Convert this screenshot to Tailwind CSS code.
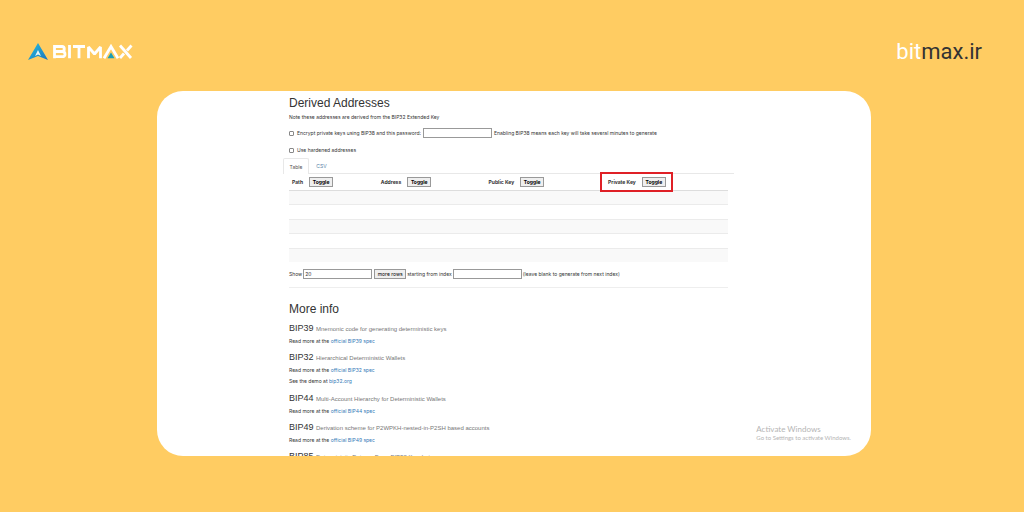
<!DOCTYPE html>
<html lang="en">
<head>
<meta charset="utf-8">
<meta name="viewport" content="width=device-width, initial-scale=1">
<title>BITMAX – Derived Addresses</title>
<script src="https://cdn.jsdelivr.net/npm/@tailwindcss/browser@4"></script>
</head>
<body class="flex h-screen flex-col overflow-hidden bg-[#ffcc62] pb-14 font-[Inter,'Liberation_Sans',sans-serif] text-[#333]">
  <header class="flex h-[91px] shrink-0 items-start justify-between pr-[42px] pl-7 pt-[38px]">
    <a href="#" aria-label="BITMAX" class="flex pt-[5px]">
      <svg class="h-[18px] w-[106px]" viewBox="0 0 106 18" fill="none">
        <defs><linearGradient id="g" x1="0" y1="0" x2="1" y2="1"><stop stop-color="#25c0e0"/><stop offset="1" stop-color="#1c74bd"/></linearGradient></defs>
        <path d="M10 0 20 17 10 13 0 17Z" fill="url(#g)"/>
        <path d="M10 7 13 13 10 11.500 7 13Z" fill="#e9f6f4"/>
        <g stroke="#fff" stroke-width="2.800">
          <path d="M26.500 3.500h7.500q2.300 0 2.300 2.400T34 8.500h-7.500M34 8.500q3 0 3 2.700T34 13.700h-7.500M26.500 2v13.200"/>
          <path d="M41.500 2v13.200M45 3.500h12M51 3.500v11.700"/>
          <path d="M60.500 15.200V4l6 7 6-7v11.200" stroke-linejoin="bevel"/>
          <path d="M76 15.200 83 3.500l7 11.700M92 2.500l11 12.500M103.500 2.500 99 7.500M96 10.500l-4 4.500"/>
        </g>
        <path d="M83 9.500 86.500 15.200h-7Z" fill="#1b9db5"/>
      </svg>
    </a>
    <a href="#" class="font-[Roboto,sans-serif] text-[22px] leading-7 text-[#333]"><span class="text-white">bit</span>max.ir</a>
  </header>

  <main class="relative mr-[153px] ml-[157px] min-h-0 flex-1 overflow-hidden rounded-[26px] bg-white pr-[143px] pl-[132px] pt-1 text-[5px] leading-2">
    <h2 class="font-['Liberation_Sans',sans-serif] text-[12px] leading-4">Derived Addresses</h2>
    <p class="mt-[2px]">Note these addresses are derived from the BIP32 Extended Key</p>
    <div class="mt-[7px] flex h-[10px] items-center whitespace-nowrap">
      <input id="enc" type="checkbox" class="mr-[3px] size-[5px] appearance-none rounded-[1px] border border-[#888]">
      <label for="enc">Encrypt private keys using BIP38 and this password:</label>
      <input aria-label="BIP38 password" type="password" class="mx-[2px] h-[10px] w-[69px] border border-[#999]">
      <span>Enabling BIP38 means each key will take several minutes to generate</span>
    </div>
    <div class="mt-2 flex h-2 items-center">
      <input id="hard" type="checkbox" class="mr-[3px] size-[5px] appearance-none rounded-[1px] border border-[#888]">
      <label for="hard">Use hardened addresses</label>
    </div>
    <nav class="mt-1 -mr-[6px] -ml-[6px] flex border-b border-[#e8e8e8]">
      <button class="-mb-px h-4 w-[26px] rounded-t-[2px] border border-b-0 border-[#e8e8e8] bg-white text-[#555]">Table</button>
      <button class="h-[15px] w-[25px] text-[#5580a5]">CSV</button>
    </nav>
    <table class="w-full table-fixed border-collapse text-left">
      <colgroup><col class="w-[20%]"><col class="w-[25%]"><col class="w-[27%]"><col></colgroup>
      <thead>
        <tr class="h-4 border-b border-[#ddd]">
          <th class="pl-[3px]"><div class="flex items-center gap-[6px]">Path <button class="h-[10px] w-6 border border-[#999] bg-[#efefef] leading-2 text-black">Toggle</button></div></th>
          <th class="pl-1"><div class="flex items-center gap-[6px]">Address <button class="h-[10px] w-6 border border-[#999] bg-[#efefef] leading-2 text-black">Toggle</button></div></th>
          <th class="pl-[2px]"><div class="flex items-center gap-[6px]">Public Key <button class="h-[10px] w-6 border border-[#999] bg-[#efefef] leading-2 text-black">Toggle</button></div></th>
          <th><div class="relative -my-1 -ml-[5px] flex h-5 w-[73px] items-center gap-[6px] border-2 border-[#df2026] pl-[6px] whitespace-nowrap">Private Key <button class="h-[10px] w-6 border border-[#999] bg-[#efefef] leading-2 text-black">Toggle</button></div></th>
        </tr>
      </thead>
      <tbody>
        <tr class="h-[14px] border-b border-[#ebebeb] bg-[#f9f9f9]"><td colspan="4"></td></tr>
        <tr class="h-[15px] border-b border-[#ebebeb]"><td colspan="4"></td></tr>
        <tr class="h-[14px] border-b border-[#ebebeb] bg-[#f9f9f9]"><td colspan="4"></td></tr>
        <tr class="h-[15px] border-b border-[#ebebeb]"><td colspan="4"></td></tr>
        <tr class="h-[14px] bg-[#f9f9f9]"><td colspan="4"></td></tr>
      </tbody>
    </table>
    <div class="mt-[7px] flex h-[10px] items-center whitespace-nowrap">
      <label for="rows">Show</label>
      <input id="rows" type="text" value="20" class="mx-[1px] h-[10px] w-[69px] border border-[#999] px-px">
      <button class="mx-[1px] h-[10px] w-8 border border-[#999] bg-[#efefef] text-black">more rows</button>
      <label for="idx">starting from index</label>
      <input id="idx" type="text" class="mx-[1px] h-[10px] w-[69px] border border-[#999]">
      <span>(leave blank to generate from next index)</span>
    </div>
    <hr class="mt-2 border-[#eee]">
    <h2 class="mt-[13px] font-['Liberation_Sans',sans-serif] text-[12px] leading-4">More info</h2>
    <h3 class="mt-[5px] font-['Liberation_Sans',sans-serif] text-[9px] leading-3">BIP39 <small class="text-[6px] text-[#777]">Mnemonic code for generating deterministic keys</small></h3>
    <p class="mt-[2px]">Read more at the <a href="#" class="text-[#337ab7]">official BIP39 spec</a></p>
    <h3 class="mt-[6px] font-['Liberation_Sans',sans-serif] text-[9px] leading-3">BIP32 <small class="text-[6px] text-[#777]">Hierarchical Deterministic Wallets</small></h3>
    <p class="mt-[2px]">Read more at the <a href="#" class="text-[#337ab7]">official BIP32 spec</a></p>
    <p class="mt-[3px]">See the demo at <a href="#" class="text-[#337ab7]">bip32.org</a></p>
    <h3 class="mt-[7px] font-['Liberation_Sans',sans-serif] text-[9px] leading-3">BIP44 <small class="text-[6px] text-[#777]">Multi-Account Hierarchy for Deterministic Wallets</small></h3>
    <p class="mt-[2px]">Read more at the <a href="#" class="text-[#337ab7]">official BIP44 spec</a></p>
    <h3 class="mt-[6px] font-['Liberation_Sans',sans-serif] text-[9px] leading-3">BIP49 <small class="text-[6px] text-[#777]">Derivation scheme for P2WPKH-nested-in-P2SH based accounts</small></h3>
    <p class="mt-[2px]">Read more at the <a href="#" class="text-[#337ab7]">official BIP49 spec</a></p>
    <h3 class="mt-[6px] font-['Liberation_Sans',sans-serif] text-[9px] leading-3">BIP85 <small class="text-[6px] text-[#777]">Deterministic Entropy From BIP32 Keychains</small></h3>
    <aside class="absolute right-[20px] bottom-[14px] font-[Lato,sans-serif] text-[#b5b5b5]">
      <p class="text-[8px] leading-[9px]">Activate Windows</p>
      <p class="text-[6px] leading-2">Go to Settings to activate Windows.</p>
    </aside>
  </main>
</body>
</html>
